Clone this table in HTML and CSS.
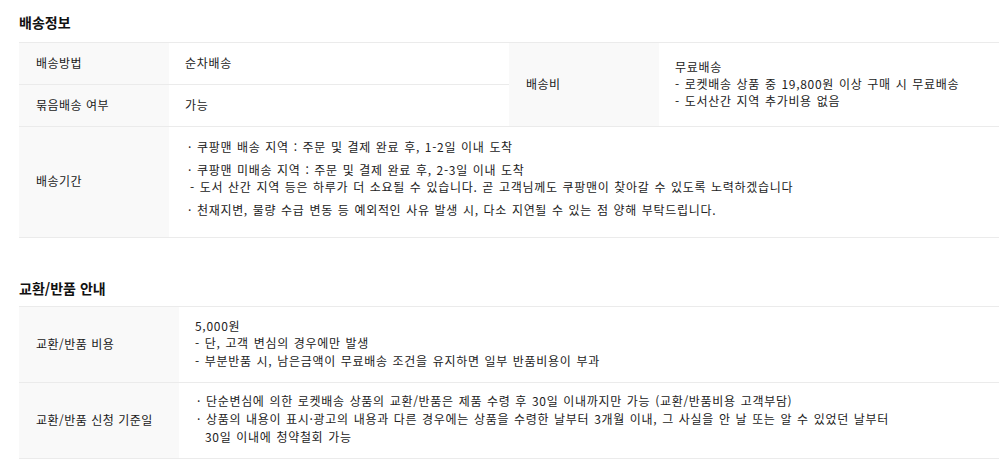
FILE: index.html
```html
<!DOCTYPE html>
<html lang="ko">
<head>
<meta charset="utf-8">
<link rel="stylesheet" href="styles.css">
</head>
<body>
<div class="wrap">
  <h2 class="title">배송정보</h2>
  <table class="info info-ship">
    <colgroup><col class="c-th"><col class="c-td"><col class="c-th"><col class="c-td"></colgroup>
    <tr class="r-short">
      <th>배송방법</th>
      <td>순차배송</td>
      <th rowspan="2">배송비</th>
      <td rowspan="2" class="fee">무료배송<br>- 로켓배송 상품 중 19,800원 이상 구매 시 무료배송<br>- 도서산간 지역 추가비용 없음</td>
    </tr>
    <tr class="r-short">
      <th>묶음배송 여부</th>
      <td>가능</td>
    </tr>
    <tr class="r-period">
      <th>배송기간</th>
      <td colspan="3" class="period">
        <p>· 쿠팡맨 배송 지역 : 주문 및 결제 완료 후, 1-2일 이내 도착</p>
        <p>· 쿠팡맨 미배송 지역 : 주문 및 결제 완료 후, 2-3일 이내 도착<br><span class="sub">- 도서 산간 지역 등은 하루가 더 소요될 수 있습니다. 곧 고객님께도 쿠팡맨이 찾아갈 수 있도록 노력하겠습니다</span></p>
        <p>· 천재지변, 물량 수급 변동 등 예외적인 사유 발생 시, 다소 지연될 수 있는 점 양해 부탁드립니다.</p>
      </td>
    </tr>
  </table>

  <h2 class="title title-2">교환/반품 안내</h2>
  <table class="info info-return">
    <colgroup><col class="c-th2"><col class="c-td2"></colgroup>
    <tr class="r-tall">
      <th>교환/반품 비용</th>
      <td>5,000원<br>- 단, 고객 변심의 경우에만 발생<br>- 부분반품 시, 남은금액이 무료배송 조건을 유지하면 일부 반품비용이 부과</td>
    </tr>
    <tr class="r-tall">
      <th>교환/반품 신청 기준일</th>
      <td class="dots">
        <ul>
          <li>· 단순변심에 의한 로켓배송 상품의 교환/반품은 제품 수령 후 30일 이내까지만 가능 (교환/반품비용 고객부담)</li>
          <li>· 상품의 내용이 표시·광고의 내용과 다른 경우에는 상품을 수령한 날부터 3개월 이내, 그 사실을 안 날 또는 알 수 있었던 날부터<br>30일 이내에 청약철회 가능</li>
        </ul>
      </td>
    </tr>
  </table>
</div>
</body>
</html>
```

FILE: styles.css
```css
html, body {
  margin: 0;
  padding: 0;
  background: #fff;
}
body {
  font-family: "Noto Sans CJK KR", "Noto Sans", sans-serif;
  font-size: 12px;
  color: #222;
}
.wrap {
  width: 980px;
  margin-left: 19px;
}
.title {
  margin: 0;
  height: 42px;
  line-height: 44px;
  font-size: 14px;
  font-weight: bold;
  color: #111;
}
.title-2 {
  margin-top: 39px;
  margin-bottom: 9px;
  height: 20px;
  line-height: 22px;
}
.info {
  width: 980px;
  border-collapse: collapse;
  table-layout: fixed;
  border-top: 1px solid #ebebeb;
}
.info tr {
  border-bottom: 1px solid #ebebeb;
}
.info th {
  background: #f9f9f9;
  font-weight: normal;
  text-align: left;
  padding: 0 0 3px 17px;
  color: #1a1a1a;
  letter-spacing: 0.5px;
}
.info td {
  padding: 0 16px 3px;
  line-height: 17px;
  vertical-align: middle;
  letter-spacing: 0.7px;
  word-spacing: 0.8px;
}
.c-th { width: 150px; }
.c-td { width: 340px; }
.c-th2 { width: 160px; }
.c-td2 { width: 820px; }
.r-short { height: 42px; }
.r-period { height: 111px; }
.r-tall { height: 76px; }
.info .period {
  vertical-align: top;
  padding: 11px 16px 0 19px;
}
.period p {
  margin: 0 0 6px;
}
.period .sub {
  padding-left: 2px;
}
.info-return td {
  line-height: 17.5px;
}
.info .dots {
  padding-left: 18px;
  line-height: 18px;
}
.dots ul {
  margin: 0;
  padding: 0;
  list-style: none;
}
.dots li {
  padding-left: 8px;
  text-indent: -8px;
}
```
